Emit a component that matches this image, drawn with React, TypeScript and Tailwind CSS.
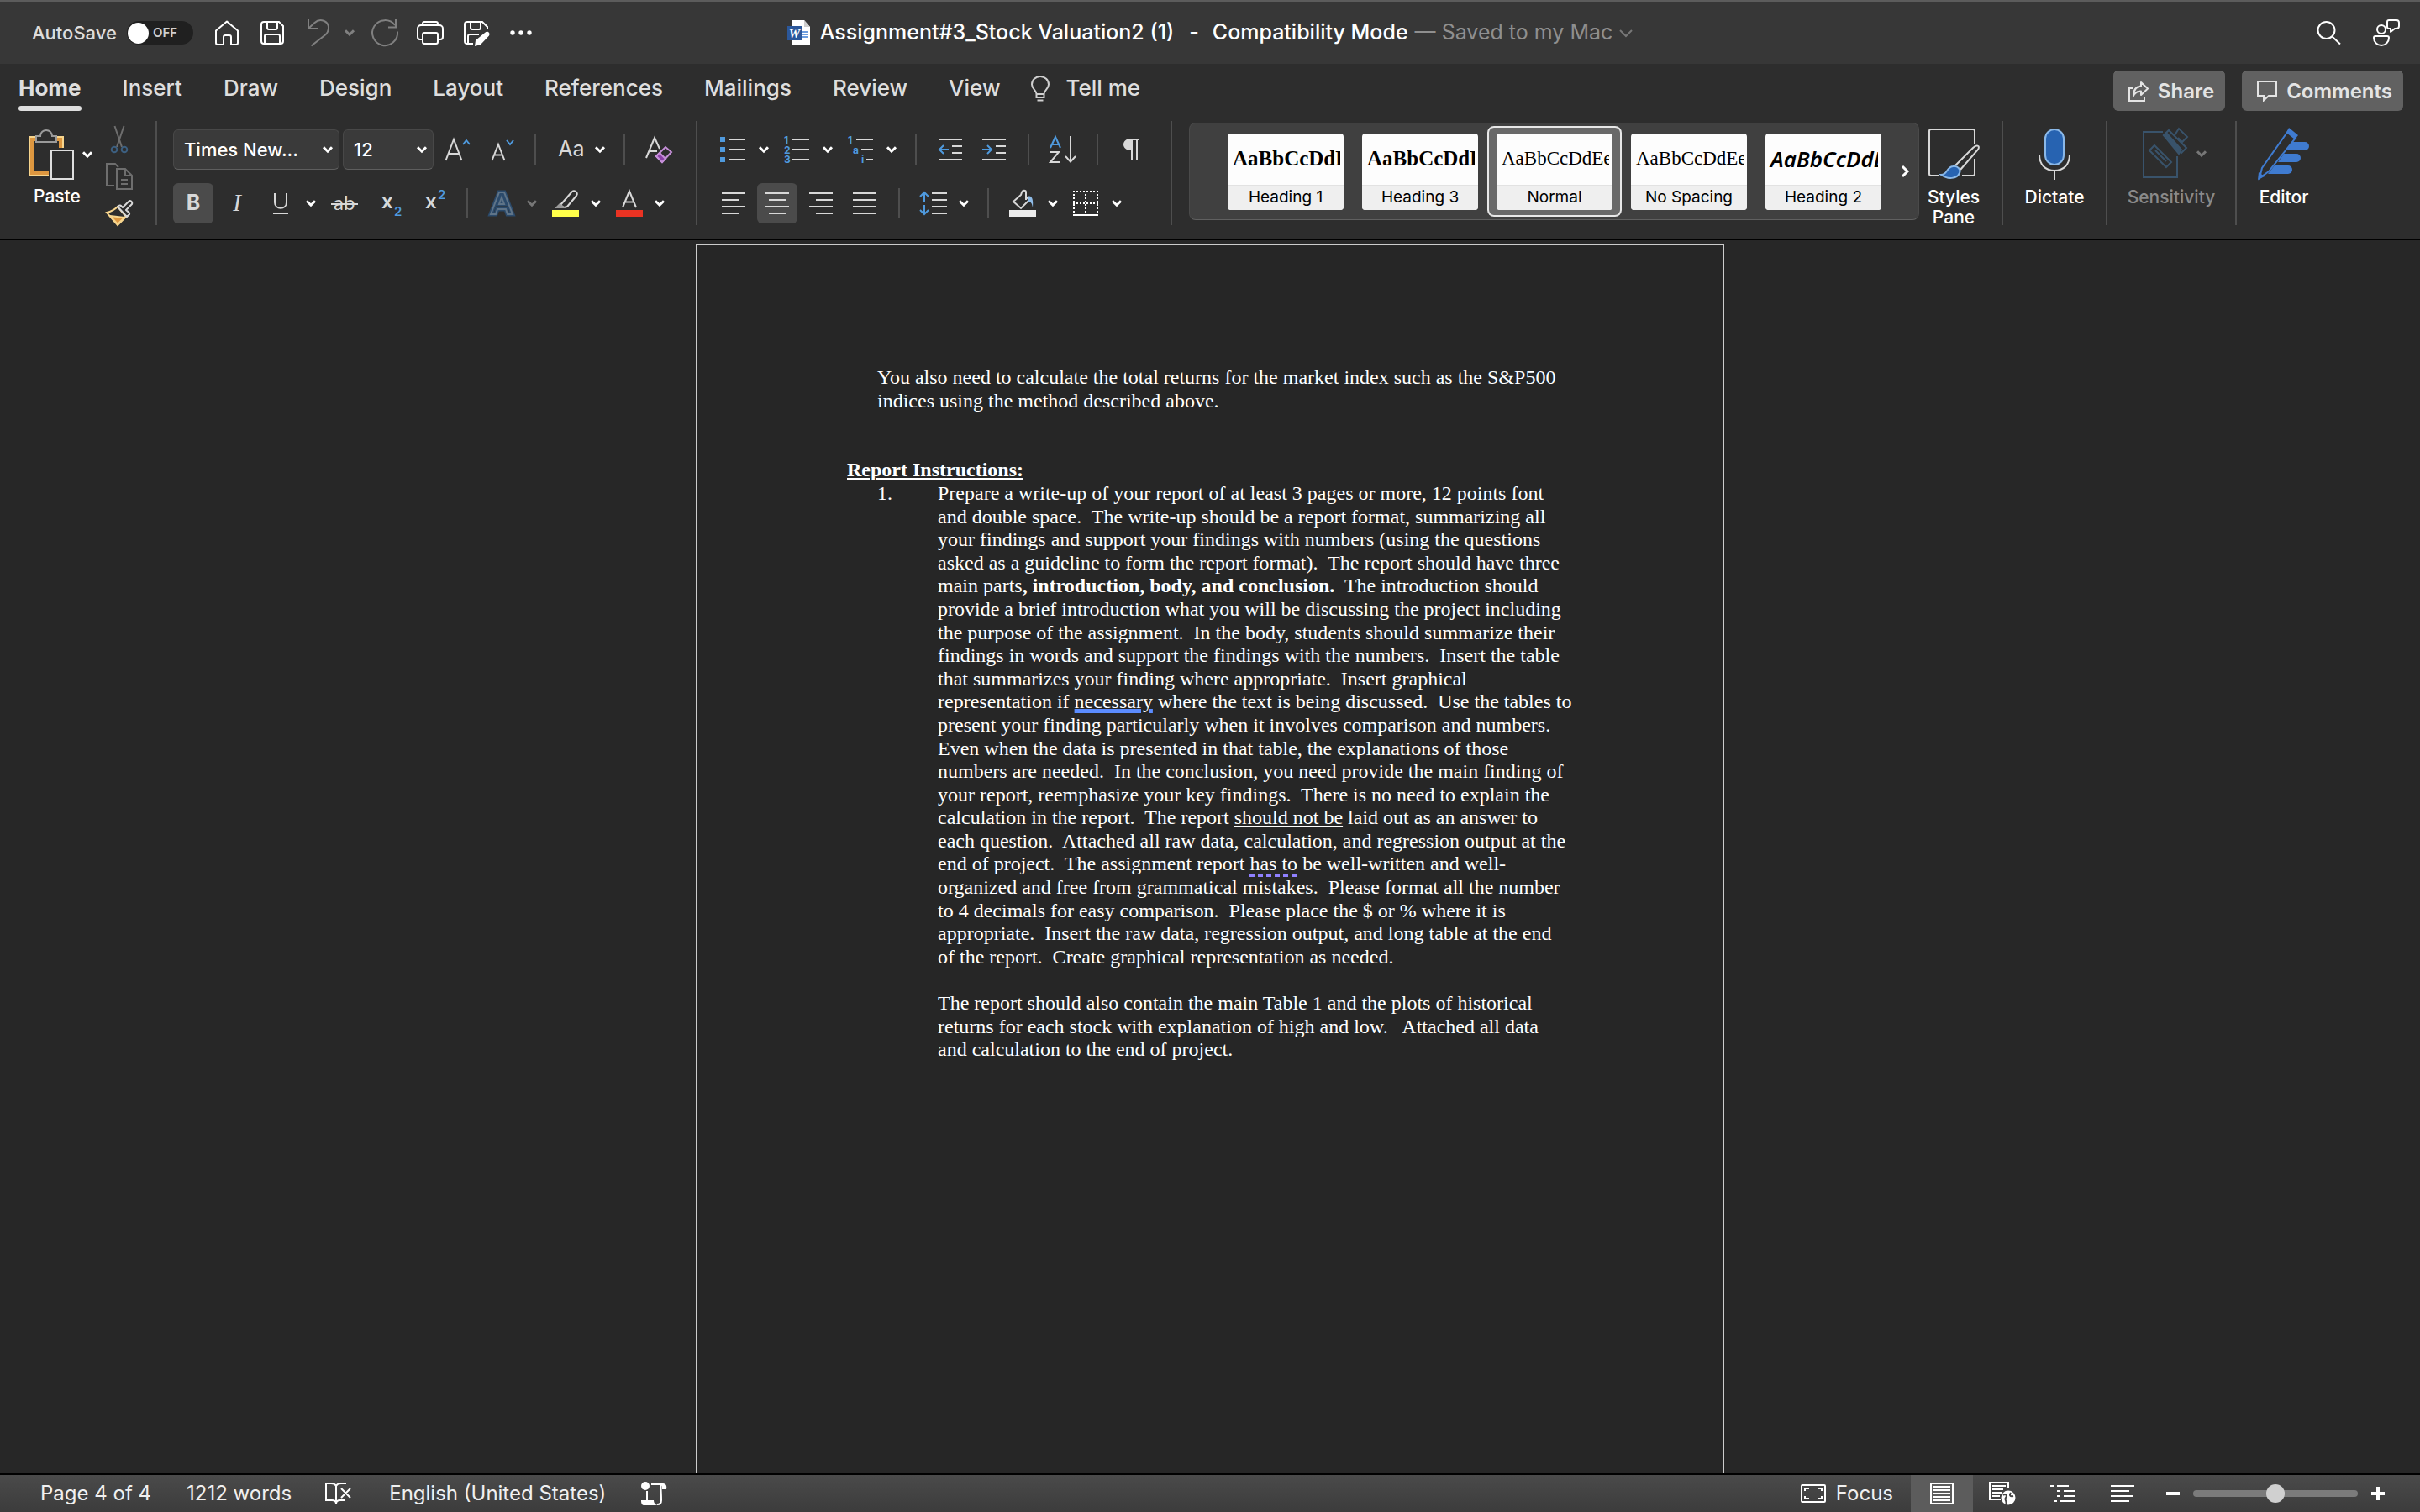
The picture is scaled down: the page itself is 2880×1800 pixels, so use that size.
import React from "react";

type IconProps = {
  w: number;
  h: number;
  color?: string;
  sw?: number;
  children: React.ReactNode;
};

function Icon({ w, h, color = "#d8d8d8", sw = 2, children }: IconProps) {
  return (
    <svg
      width={w}
      height={h}
      viewBox={`0 0 ${w} ${h}`}
      fill="none"
      stroke={color}
      strokeWidth={sw}
      className="block shrink-0 overflow-visible"
      aria-hidden="true"
    >
      {children}
    </svg>
  );
}

function Chevron({ color = "#ffffff" }: { color?: string }) {
  return (
    <Icon w={12} h={8} color={color} sw={3}>
      <path d="M1 1.2 6 6.2 11 1.2" />
    </Icon>
  );
}

function Tool({
  label,
  className = "",
  children,
}: {
  label: string;
  className?: string;
  children: React.ReactNode;
}) {
  return (
    <button type="button" aria-label={label} className={`flex shrink-0 items-center ${className}`}>
      {children}
    </button>
  );
}

function Divider({ className = "" }: { className?: string }) {
  return <div className={`h-9 w-[2px] shrink-0 bg-[#4e4e4e] ${className}`} />;
}

function GroupDivider({ className = "" }: { className?: string }) {
  return <div className={`h-[124px] w-[2px] shrink-0 bg-[#4e4e4e] ${className}`} />;
}

const BLUE = "#4f9ade";

/* ---------- title bar ---------- */

function TitleBar() {
  return (
    <header className="grid h-[76px] shrink-0 grid-cols-[1fr_auto_1fr] items-center border-t-2 border-[#5c5c5c] bg-[#373737]">
      <div className="flex items-center pl-[38px]">
        <label className="flex items-center text-[22px] font-medium text-[#dcdcdc]">
          AutoSave
          <input type="checkbox" role="switch" className="sr-only" />
          <span className="ml-3 flex h-7 w-[79px] items-center rounded-full bg-[#202020] text-[15px] font-semibold text-[#cfcfcf]">
            <span className="mx-px size-[25px] rounded-full bg-white" />
            <span className="ml-1">OFF</span>
          </span>
        </label>
        <Tool label="Home" className="ml-[26px]">
          <Icon w={28} h={30} color="#fff">
            <path
              d="M1 12.5 14 1.5 27 12.5V27a2 2 0 0 1-2 2H19V20a2 2 0 0 0-2-2H12a2 2 0 0 0-2 2V29H3a2 2 0 0 1-2-2Z"
              strokeLinejoin="round"
            />
          </Icon>
        </Tool>
        <Tool label="Save" className="ml-[26px]">
          <Icon w={28} h={28} color="#fff">
            <path d="M4 1H22L27 6V24a3 3 0 0 1-3 3H4a3 3 0 0 1-3-3V4a3 3 0 0 1 3-3Z" />
            <path d="M8 1V8a2 2 0 0 0 2 2h8a2 2 0 0 0 2-2V1M5 27V18a2 2 0 0 1 2-2H21a2 2 0 0 1 2 2v9" />
          </Icon>
        </Tool>
        <Tool label="Undo" className="ml-7">
          <Icon w={26} h={32} color="#808080">
            <path d="M1 0V11H12M1 11 8.500 4C15-2 25 2 25 10 25 14.500 23 17 20.500 19L4.500 31.500" />
          </Icon>
        </Tool>
        <Tool label="Undo history" className="ml-[18px]">
          <Chevron color="#808080" />
        </Tool>
        <Tool label="Redo" className="ml-5">
          <Icon w={32} h={32} color="#808080">
            <path d="M31 14.500A15 15 0 1 1 28 7M29 0V9.500H20" />
          </Icon>
        </Tool>
        <Tool label="Print" className="ml-[22px]">
          <Icon w={32} h={28} color="#fff">
            <path d="M7 22H4a3 3 0 0 1-3-3V9a4 4 0 0 1 4-4H27a4 4 0 0 1 4 4V19a3 3 0 0 1-3 3H25" />
            <path d="M7 5V3a2 2 0 0 1 2-2H23a2 2 0 0 1 2 2V5M9 14H23a2 2 0 0 1 2 2v9a2 2 0 0 1-2 2H9a2 2 0 0 1-2-2V16a2 2 0 0 1 2-2Z" />
          </Icon>
        </Tool>
        <Tool label="Save as" className="ml-6">
          <Icon w={31} h={32} color="#fff">
            <path d="M11 29H4a3 3 0 0 1-3-3V6a3 3 0 0 1 3-3H22L28 9V12" />
            <path d="M8 3V10a2 2 0 0 0 2 2h8a2 2 0 0 0 2-2V3M5 29V20a2 2 0 0 1 2-2H18" />
            <path d="M25 16c3-3 7 0 5 3.500L20 30l-7 2 1-7Z" fill="#fff" stroke="none" />
          </Icon>
        </Tool>
        <Tool label="More commands" className="ml-6">
          <Icon w={26} h={6} color="none">
            <g fill="#fff">
              <circle cx="3" cy="3" r="2.700" />
              <circle cx="13" cy="3" r="2.700" />
              <circle cx="23" cy="3" r="2.700" />
            </g>
          </Icon>
        </Tool>
      </div>

      <h1 className="flex items-center text-[25px] font-medium whitespace-pre text-white">
        <Icon w={27} h={30} color="none">
          <path d="M5 0H20L27 8V30H5Z" fill="#fff" />
          <path d="M20 0V8H27Z" fill="#cfcfcf" />
          <path d="M17 14h7M17 17h7M17 20h7" stroke="#3b7dd8" strokeWidth="1.500" />
          <rect x="0" y="7" width="17" height="17" fill="#2b579a" />
          <text
            x="8.500"
            y="21"
            textAnchor="middle"
            fill="#fff"
            fontSize="15"
            fontWeight="700"
            fontStyle="italic"
            fontFamily="Liberation Serif, serif"
          >
            W
          </text>
        </Icon>
        <span className="ml-3">Assignment#3_Stock Valuation2 (1)</span>
        <span className="ml-[18px]">-</span>
        <span className="ml-4">Compatibility Mode</span>
        <button type="button" className="ml-2 flex items-center font-normal text-[#8f8f8f]">
          — Saved to my Mac
          <span className="ml-2">
            <Icon w={16} h={9} color="#777">
              <path d="M1 1 8 8 15 1" />
            </Icon>
          </span>
        </button>
      </h1>

      <div className="flex items-center justify-end pr-6">
        <Tool label="Search">
          <Icon w={29} h={28} color="#fff">
            <circle cx="11.500" cy="11" r="10" />
            <path d="M18.500 18.500 28 27.500" />
          </Icon>
        </Tool>
        <Tool label="Account" className="ml-[38px]">
          <Icon w={32} h={32} color="#fff">
            <circle cx="10" cy="12" r="5" />
            <path d="M3 20H17a2 2 0 0 1 2 2C19 27 15 31 10 31S1 27 1 22a2 2 0 0 1 2-2Z" />
            <path
              d="M19 1H28a3 3 0 0 1 3 3V8a3 3 0 0 1-3 3H26L21 15V11H19a2 2 0 0 1-2-2V3a2 2 0 0 1 2-2Z"
              strokeLinejoin="round"
            />
          </Icon>
        </Tool>
      </div>
    </header>
  );
}

/* ---------- tab strip ---------- */

const tabs = ["Insert", "Draw", "Design", "Layout", "References", "Mailings", "Review", "View"];

function TabStrip() {
  return (
    <div className="flex h-[68px] items-start justify-between pr-5 pl-[22px]">
      <nav className="flex gap-[49px] pt-3 text-[26px] leading-[34px] font-medium text-[#dedede]">
        <div className="flex flex-col">
          <button type="button" className="font-bold">
            Home
          </button>
          <span className="mt-1 h-[6px] rounded-full bg-[#dedede]" />
        </div>
        {tabs.map((t) => (
          <button type="button" key={t} className="h-[34px]">
            {t}
          </button>
        ))}
        <button type="button" className="-ml-3 flex h-[34px] items-center gap-[19px]">
          <Icon w={22} h={31} color="#d0d0d0">
            <path d="M6.500 22C6.500 17 1 16 1 10.500a10 9.500 0 0 1 20 0C21 16 15.500 17 15.500 22V26H6.500ZM6.500 22H15.500M7.500 29.500H14.500" />
          </Icon>
          Tell me
        </button>
      </nav>
      <div className="flex gap-5 pt-2 text-2xl font-semibold text-[#e4e4e4]">
        <button
          type="button"
          className="flex h-12 items-center gap-[11px] rounded-md border-t border-[#7a7a7a] bg-[#616161] pr-[13px] pl-[18px]"
        >
          <Icon w={24} h={26} color="#e4e4e4">
            <path d="M6 9H1V24H19V19" />
            <path
              d="M15 2 23 9.500 15 17V12.500C11 12.500 8 14 6 18 6 11 9 7 15 6.500Z"
              strokeLinejoin="round"
            />
          </Icon>
          Share
        </button>
        <button
          type="button"
          className="flex h-12 items-center gap-[11px] rounded-md border-t border-[#7a7a7a] bg-[#616161] pr-[13px] pl-[18px]"
        >
          <Icon w={24} h={25} color="#e4e4e4">
            <path d="M1 1H23V18H14L8 23.500V18H1Z" />
          </Icon>
          Comments
        </button>
      </div>
    </div>
  );
}

/* ---------- ribbon ---------- */

function ClipboardGroup() {
  return (
    <div className="flex h-[124px] w-[151px] shrink-0 justify-between pr-[27px]">
      <button type="button" className="flex h-[104px] flex-col pt-[10px] text-left">
        <span className="flex items-center">
          <Icon w={54} h={60}>
            <path d="M24 52H4V12H38V22" stroke="#dd9740" strokeWidth="4" />
            <path d="M24 55H1V9H41V22" stroke="#f7d58d" />
            <path d="M9 8H14C14-1.500 28-1.500 28 8H33V15H9Z" fill="#2d2d2d" stroke="#9a9a9a" />
            <path d="M27 25H53V59H27Z" stroke="#dedede" />
          </Icon>
          <span className="ml-[10px]">
            <Chevron />
          </span>
        </span>
        <span className="mt-2 ml-[6px] text-[21px] leading-6 font-medium text-white">Paste</span>
      </button>
      <div className="flex flex-col items-center gap-3 pt-[6px]">
        <Tool label="Cut">
          <Icon w={22} h={32} color="#6e6e6e">
            <path d="M5.500 0 14 25M16.500 0 8 25" />
            <g stroke="#3c5f80">
              <circle cx="5" cy="28" r="3.300" />
              <circle cx="17" cy="28" r="3.300" />
            </g>
          </Icon>
        </Tool>
        <Tool label="Copy">
          <Icon w={32} h={32} color="#6e6e6e">
            <path d="M10 27H1V1H11L15 5" />
            <path d="M13 7H23L31 15V31H13ZM23 7V15H31M18 20H26M18 25H26" />
          </Icon>
        </Tool>
        <Tool label="Format painter">
          <Icon w={32} h={32}>
            <path d="M1 15C6 14 10 12 14 8L24 20 14 30Z" stroke="#f7d58d" />
            <path d="M5 19 22 21 14 29Z" fill="#dd9740" stroke="#f7d58d" />
            <path
              d="M14 8 25 20 28 17C29 15 26 14 24 12L31 5C32 2 29 0 27 2L20 9C18 7 17 5 14 8Z"
              fill="#2d2d2d"
              strokeLinejoin="round"
            />
          </Icon>
        </Tool>
      </div>
    </div>
  );
}

function RibbonSelect({
  label,
  value,
  className,
}: {
  label: string;
  value: string;
  className: string;
}) {
  return (
    <div className={`relative h-12 shrink-0 ${className}`}>
      <select
        aria-label={label}
        className="h-12 w-full appearance-none rounded-md border border-[#484848] border-b-[#5e5e5e] bg-[#3a3a3a] pl-3 text-[22px] font-medium text-white"
      >
        <option>{value}</option>
      </select>
      <span className="pointer-events-none absolute top-5 right-2">
        <Chevron />
      </span>
    </div>
  );
}

const sans = "Inter, sans-serif";

function FontGroup() {
  return (
    <div className="flex shrink-0 flex-col gap-4 pt-[10px]">
      <div className="flex h-12 items-center">
        <RibbonSelect label="Font" value="Times New..." className="w-[198px]" />
        <RibbonSelect label="Font size" value="12" className="ml-1 w-[108px]" />
        <Tool label="Increase font size" className="ml-[13px]">
          <Icon w={32} h={28}>
            <path d="M1.500 27 11 2 20.500 27M5 19H17" />
            <path d="M22 8 26 3 30 8" stroke={BLUE} />
          </Icon>
        </Tool>
        <Tool label="Decrease font size" className="ml-[23px]">
          <Icon w={28} h={28}>
            <path d="M1.500 27 9 8 16.500 27M4 20.500H14" />
            <path d="M19 3 23 8 27 3" stroke={BLUE} />
          </Icon>
        </Tool>
        <Divider className="ml-6" />
        <Tool label="Change case" className="ml-6">
          <span className="w-[36px] text-[25px] text-[#d8d8d8]">Aa</span>
          <span className="ml-[10px]">
            <Chevron />
          </span>
        </Tool>
        <Divider className="ml-[22px]" />
        <Tool label="Clear formatting" className="ml-6">
          <Icon w={32} h={32}>
            <path d="M1 26 11 2 17 15M5 18H14" />
            <path d="M13 24 24 13 31 19 20 31Z" stroke="#c58fd8" />
            <path d="M13 24 17 20 24 27 20 31Z" fill="#8a3fa6" stroke="#c58fd8" />
          </Icon>
        </Tool>
      </div>
      <div className="flex h-12 items-center">
        <Tool label="Bold" className="h-12 w-12 justify-center rounded-md bg-[#4b4b4b]">
          <span className="text-[25px] font-bold text-[#d8d8d8]">B</span>
        </Tool>
        <Tool label="Italic" className="ml-5 w-4 justify-center">
          <span className="font-['Liberation_Serif',serif] text-[29px] text-[#d8d8d8] italic">I</span>
        </Tool>
        <Tool label="Underline" className="ml-[34px]">
          <Icon w={20} h={28}>
            <path d="M3 2V13C3 22 17 22 17 13V2M1 26H19" />
          </Icon>
          <span className="ml-5">
            <Chevron />
          </span>
        </Tool>
        <Tool label="Strikethrough" className="ml-[18px]">
          <Icon w={32} h={24}>
            <text x="3" y="20" fontSize="24" fill="#d8d8d8" stroke="none" fontFamily="Lato, sans-serif">
              ab
            </text>
            <path d="M0 13H32" />
          </Icon>
        </Tool>
        <Tool label="Subscript" className="ml-[28px]">
          <Icon w={26} h={36}>
            <text x="0" y="24" fontSize="24" fontWeight="600" fill="#d8d8d8" stroke="none" fontFamily={sans}>
              x
            </text>
            <text x="15" y="33" fontSize="15" fontWeight="600" fill={BLUE} stroke="none" fontFamily={sans}>
              2
            </text>
          </Icon>
        </Tool>
        <Tool label="Superscript" className="ml-[26px]">
          <Icon w={26} h={36}>
            <text x="0" y="24" fontSize="24" fontWeight="600" fill="#d8d8d8" stroke="none" fontFamily={sans}>
              x
            </text>
            <text x="15" y="13" fontSize="15" fontWeight="600" fill={BLUE} stroke="none" fontFamily={sans}>
              2
            </text>
          </Icon>
        </Tool>
        <Divider className="ml-[23px]" />
        <Tool label="Text effects" className="ml-[24px]">
          <Icon w={32} h={32}>
            <path
              d="M3 29 13 3H19L29 29H23L21 23H11L9 29ZM13 17H19L16 9Z"
              stroke="#2b4a6b"
              strokeWidth="5"
            />
            <path d="M3 29 13 3H19L29 29H23L21 23H11L9 29ZM13 17H19L16 9Z" stroke="#5f7488" />
          </Icon>
          <span className="ml-[14px]">
            <Chevron color="#777777" />
          </span>
        </Tool>
        <Tool label="Highlight colour" className="ml-[18px]">
          <Icon w={32} h={32}>
            <path d="M10 18 23 3C26-1 32 3 29 7L18 20 14 21Z" strokeLinejoin="round" />
            <path d="M9 16 16 22 3 22Z" fill="#9a9a9a" stroke="none" />
            <path d="M0 24H32V32H0Z" fill="#ffff4a" stroke="none" />
          </Icon>
          <span className="ml-[14px]">
            <Chevron />
          </span>
        </Tool>
        <Tool label="Font colour" className="ml-[18px]">
          <Icon w={32} h={32}>
            <path d="M8 21 16 1.500 24 21M11 14.500H21" />
            <path d="M0 24H32V32H0Z" fill="#ea3323" stroke="none" />
          </Icon>
          <span className="ml-[14px]">
            <Chevron />
          </span>
        </Tool>
      </div>
    </div>
  );
}

function BlueText({ x, y, children }: { x: number; y: number; children: string }) {
  return (
    <text x={x} y={y} fontSize="12" fontWeight="700" fill={BLUE} stroke="none" fontFamily={sans}>
      {children}
    </text>
  );
}

function ParagraphGroup() {
  return (
    <div className="flex shrink-0 flex-col gap-4 pt-[10px]">
      <div className="flex h-12 items-center">
        <Tool label="Bullets">
          <Icon w={30} h={30}>
            <path d="M0 0H6V6H0ZM0 12H6V18H0ZM0 24H6V30H0Z" fill={BLUE} stroke="none" />
            <path d="M10 3H30M10 15H30M10 27H30" />
          </Icon>
          <span className="ml-4">
            <Chevron />
          </span>
        </Tool>
        <Tool label="Numbering" className="ml-[18px]">
          <Icon w={30} h={32}>
            <BlueText x={0} y={9}>1</BlueText>
            <BlueText x={0} y={21}>2</BlueText>
            <BlueText x={0} y={32}>3</BlueText>
            <path d="M10 4H30M10 16H30M10 28H30" />
          </Icon>
          <span className="ml-4">
            <Chevron />
          </span>
        </Tool>
        <Tool label="Multilevel list" className="ml-[18px]">
          <Icon w={30} h={32}>
            <BlueText x={0} y={9}>1</BlueText>
            <BlueText x={6} y={21}>a</BlueText>
            <BlueText x={16} y={32}>i</BlueText>
            <path d="M10 4H30M16 16H30M22 28H30" />
          </Icon>
          <span className="ml-4">
            <Chevron />
          </span>
        </Tool>
        <Divider className="ml-[22px]" />
        <Tool label="Decrease indent" className="ml-[26px]">
          <Icon w={28} h={26}>
            <path d="M0 1H28M0 25H28M16 9H28M16 17H28" />
            <path d="M12 13H1M6 8 1 13 6 18" stroke={BLUE} />
          </Icon>
        </Tool>
        <Tool label="Increase indent" className="ml-6">
          <Icon w={28} h={26}>
            <path d="M0 1H28M0 25H28M16 9H28M16 17H28" />
            <path d="M0 13H11M6 8 11 13 6 18" stroke={BLUE} />
          </Icon>
        </Tool>
        <Divider className="ml-[26px]" />
        <Tool label="Sort" className="ml-6">
          <Icon w={32} h={32}>
            <path d="M1 14 7 1 13 14M3 10H11" stroke={BLUE} />
            <path d="M1 19H11L1 31H12M25 0V30M19 24 25 30.500 31 24" />
          </Icon>
        </Tool>
        <Divider className="ml-6" />
        <Tool label="Show marks" className="ml-[30px]">
          <Icon w={20} h={26}>
            <path d="M19 1H8M10 1V25M16 1V25" />
            <path d="M9 0C-3 0-3 14 9 14Z" fill="#d8d8d8" stroke="none" />
          </Icon>
        </Tool>
      </div>
      <div className="flex h-12 items-center">
        <Tool label="Align left" className="ml-[2px]">
          <Icon w={28} h={28}>
            <path d="M0 2H28M0 10H20M0 18H28M0 26H20" />
          </Icon>
        </Tool>
        <Tool label="Align centre" className="ml-[14px] h-12 w-12 justify-center rounded-md bg-[#4b4b4b]">
          <Icon w={28} h={28}>
            <path d="M0 2H28M4 10H24M0 18H28M4 26H24" />
          </Icon>
        </Tool>
        <Tool label="Align right" className="ml-[14px]">
          <Icon w={28} h={28}>
            <path d="M0 2H28M8 10H28M0 18H28M8 26H28" />
          </Icon>
        </Tool>
        <Tool label="Justify" className="ml-6">
          <Icon w={28} h={28}>
            <path d="M0 2H28M0 10H28M0 18H28M0 26H28" />
          </Icon>
        </Tool>
        <Divider className="ml-[26px]" />
        <Tool label="Line spacing" className="ml-6">
          <Icon w={32} h={28}>
            <path d="M14 2H32M14 10H32M14 18H32M14 26H32" />
            <path d="M5 12V1M0 6 5 1 10 6M5 16V27M0 22 5 27 10 22" stroke={BLUE} />
          </Icon>
          <span className="ml-[14px]">
            <Chevron />
          </span>
        </Tool>
        <Divider className="ml-[22px]" />
        <Tool label="Shading" className="ml-6">
          <Icon w={32} h={32}>
            <path d="M20 12V3C20 0 16 0 15 3L14 6 5 14 14 22 24 12 20 8" />
            <path d="M22 8C27 6 29 11 28 21 27 16 26 14 23 14Z" fill="#8fbce8" stroke="none" />
            <path d="M0 24H32V32H0Z" fill="#ececec" stroke="none" />
          </Icon>
          <span className="ml-[14px]">
            <Chevron />
          </span>
        </Tool>
        <Tool label="Borders" className="ml-[18px]">
          <Icon w={30} h={30} color="#fff">
            <path d="M0 1H30M0 15H30M1 4V28M29 4V28M15 4V28" strokeDasharray="2 2" />
            <path d="M0 29H30" />
          </Icon>
          <span className="ml-4">
            <Chevron />
          </span>
        </Tool>
      </div>
    </div>
  );
}

const styleCards = [
  { name: "Heading 1", font: "font-['Liberation_Serif',serif] text-[25px] font-bold" },
  { name: "Heading 3", font: "font-['Liberation_Serif',serif] text-[25px] font-bold" },
  { name: "Normal", font: "font-['Liberation_Serif',serif] text-[23px]", selected: true },
  { name: "No Spacing", font: "font-['Liberation_Serif',serif] text-[23px]" },
  { name: "Heading 2", font: "font-['Noto_Sans',sans-serif] text-[26px] font-semibold italic" },
];

function StylesGallery() {
  return (
    <div className="mt-[2px] flex h-[116px] shrink-0 items-center rounded-lg border border-[#4a4a4a] border-b-[#606060] bg-[#404040] pl-[34px]">
      {styleCards.map((s) => (
        <button
          type="button"
          key={s.name}
          className={`flex h-[108px] w-[160px] items-center justify-center rounded-lg border-2 ${
            s.selected ? "border-[#e8e8e8] bg-[#696969]" : "border-transparent"
          }`}
        >
          <span className="flex h-[91px] w-[138px] flex-col overflow-hidden rounded-sm bg-[#fdfdfd] text-black">
            <span className={`mx-1 flex h-[61px] items-center overflow-hidden pl-[2px] ${s.font}`}>
              AaBbCcDdEe
            </span>
            <span className="flex h-[30px] items-center justify-center border-t border-[#e2e2e2] bg-[#efefef] text-[19px]">
              {s.name}
            </span>
          </span>
        </button>
      ))}
      <Tool label="More styles" className="mr-[11px] ml-3">
        <Icon w={10} h={14} color="#fff" sw={3}>
          <path d="M2 1 8 7 2 13" />
        </Icon>
      </Tool>
    </div>
  );
}

function BigButton({
  label,
  dim = false,
  className = "",
  children,
}: {
  label: React.ReactNode;
  dim?: boolean;
  className?: string;
  children: React.ReactNode;
}) {
  return (
    <button
      type="button"
      className={`flex shrink-0 flex-col items-center pt-2 text-[21px] leading-6 font-medium ${
        dim ? "text-[#8a8a8a]" : "text-white"
      } ${className}`}
    >
      <span className="mb-[9px] flex items-center">{children}</span>
      {label}
    </button>
  );
}

function Ribbon() {
  return (
    <div className="flex h-[142px] items-start border-b-2 border-black pl-[34px]">
      <ClipboardGroup />
      <GroupDivider />
      <div className="ml-[19px]">
        <FontGroup />
      </div>
      <GroupDivider className="ml-7" />
      <div className="ml-[27px]">
        <ParagraphGroup />
      </div>
      <GroupDivider className="ml-9" />
      <div className="ml-5">
        <StylesGallery />
      </div>
      <BigButton
        className="w-[82px]"
        label={
          <span>
            Styles
            <br />
            Pane
          </span>
        }
      >
        <Icon w={62} h={62}>
          <path d="M14 57H4a2 2 0 0 1-2-2V4a2 2 0 0 1 2-2H54a2 2 0 0 1 2 2V19M56 37V55a2 2 0 0 1-2 2H41" />
          <path d="M33 45 54 24C58 20 63 21 60 26L39 50" />
          <path
            d="M16 56C24 56 22 47 30 46 36 45 40 50 38 54 35 61 24 62 16 56Z"
            fill="#2763b1"
            stroke="#8ab8e8"
          />
        </Icon>
      </BigButton>
      <GroupDivider className="ml-4" />
      <BigButton className="w-[122px]" label="Dictate">
        <Icon w={38} h={62}>
          <rect x="8" y="2" width="22" height="42" rx="11" fill="#2763b1" stroke="#8ab8e8" />
          <path d="M1 32C1 44 8 51 19 51S37 44 37 32M19 51V62" />
        </Icon>
      </BigButton>
      <GroupDivider />
      <BigButton className="w-[152px]" dim label="Sensitivity">
        <Icon w={54} h={62} color="#39536b">
          <path d="M24 5H1V59H41V34" />
          <path d="M14 21 34 41 28 47 8 27ZM15 27 28 40" />
          <path d="M31 3 52 24 46 30 25 9Z" />
          <path d="M25 9 28 6 46 26 43 31Z" fill="#39536b" />
          <path d="M38 9 43 1 53 11 47 17 42 12" />
        </Icon>
        <span className="-mr-2 ml-[10px]">
          <Chevron color="#777777" />
        </span>
      </BigButton>
      <GroupDivider />
      <BigButton className="ml-[22px] w-[68px]" label="Editor">
        <Icon w={62} h={62} color="none">
          <path
            d="M41 17H56a5 5 0 0 1 0 10H34ZM31 31H46a5 5 0 0 1 0 10H24ZM20 45H36a5 5 0 0 1 0 10H12Z"
            fill="#3f7bd0"
          />
          <path d="M36 4 45 12 13 52 2 60 5 48Z" fill="#2d2d2d" stroke="#3f7bd0" strokeWidth="2" />
          <path d="M37 0 48 9 44 14 34 6ZM1 53 8 58 0 62Z" fill="#3f7bd0" />
        </Icon>
      </BigButton>
    </div>
  );
}

/* ---------- document ---------- */

function DocumentPage() {
  return (
    <article className="mx-auto mt-1 h-[1584px] w-[1224px] shrink-0 border-2 border-[#cccccc] bg-[#262626] px-[178px] pt-36 font-['Liberation_Serif',serif] text-2xl leading-[1.15] whitespace-pre-wrap text-white">
      <p className="ml-9">
        You also need to calculate the total returns for the market index such as the S&amp;P500 indices
        using the method described above.
      </p>
      <br />
      <br />
      <h2 className="font-bold underline decoration-2 underline-offset-2">Report Instructions:</h2>
      <ol className="ml-9">
        <li className="flex">
          <span className="w-[72px] shrink-0">1.</span>
          <div className="min-w-0 flex-1">
            <p>
              {
                "Prepare a write-up of your report of at least 3 pages or more, 12 points font and double space.  The write-up should be a report format, summarizing all your findings and support your findings with numbers (using the questions asked as a guideline to form the report format).  The report should have three main parts"
              }
              <b>, introduction, body, and conclusion.</b>
              {
                "  The introduction should provide a brief introduction what you will be discussing the project including the purpose of the assignment.  In the body, students should summarize their findings in words and support the findings with the numbers.  Insert the table that summarizes your finding where appropriate.  Insert graphical representation if "
              }
              <span className="underline decoration-[#5b8cff] decoration-double decoration-2 underline-offset-1">
                necessary
              </span>
              {
                " where the text is being discussed.  Use the tables to present your finding particularly when it involves comparison and numbers.  Even when the data is presented in that table, the explanations of those numbers are needed.  In the conclusion, you need provide the main finding of your report, reemphasize your key findings.  There is no need to explain the calculation in the report.  The report "
              }
              <span className="underline decoration-2 underline-offset-2">should not be</span>
              {
                " laid out as an answer to each question.  Attached all raw data, calculation, and regression output at the end of project.  The assignment report "
              }
              <span className="bg-[repeating-linear-gradient(90deg,#8f80ff_0_6px,transparent_6px_10px)] bg-[length:100%_4px] bg-bottom bg-no-repeat pb-[3px]">
                has to
              </span>
              {
                " be well-written and well-organized and free from grammatical mistakes.  Please format all the number to 4 decimals for easy comparison.  Please place the $ or % where it is appropriate.  Insert the raw data, regression output, and long table at the end of the report.  Create graphical representation as needed."
              }
            </p>
            <br />
            <p>
              {
                "The report should also contain the main Table 1 and the plots of historical returns for each stock with explanation of high and low.   Attached all data\nand calculation to the end of project."
              }
            </p>
          </div>
        </li>
      </ol>
    </article>
  );
}

/* ---------- status bar ---------- */

function StatusBar() {
  return (
    <footer className="flex h-[46px] shrink-0 items-center justify-between border-t-2 border-black bg-linear-to-b from-[#4a4a4a] to-[#3c3c3c] text-2xl text-[#f0f0f0]">
      <div className="flex items-center pl-12">
        <button type="button">Page 4 of 4</button>
        <button type="button" className="ml-[42px]">
          1212 words
        </button>
        <Tool label="Proofing" className="ml-10">
          <Icon w={32} h={26} color="#fff">
            <path d="M13 4C12 2 10 1 7 1H1V21H8C11 21 13 22 13 25 13 22 15 21 18 21H24M13 25V4C14 2 16 1 19 1H25M19 7 30 18M30 7 19 18" />
          </Icon>
        </Tool>
        <button type="button" className="ml-[44px]">
          English (United States)
        </button>
        <Tool label="Macros" className="ml-[42px]">
          <Icon w={32} h={28} color="#fff">
            <circle cx="5" cy="5" r="5" fill="#fff" stroke="none" />
            <path d="M7 11V24M12 3H26C22 3 24 8 24 22 24 26 22 27 19 27" />
            <path d="M25 2C29 2 31 4 30 9H25ZM0 22H15C15 25 17 28 20 28H4C1 28 0 26 0 22Z" fill="#fff" stroke="none" />
          </Icon>
        </Tool>
      </div>
      <div className="flex h-full items-center pr-[42px]">
        <button type="button" className="flex items-center gap-3">
          <Icon w={30} h={22} color="#fff">
            <rect x="1" y="1" width="28" height="20" rx="1" />
            <path d="M5 8V5H10M20 5H25V8M25 14V17H20M10 17H5V14" />
          </Icon>
          Focus
        </button>
        <Tool label="Print layout" className="ml-[21px] h-full w-[74px] justify-center bg-[#5c5c5c]">
          <Icon w={28} h={26} color="#fff">
            <path d="M1 1H27V25H1ZM4 5H24M4 9H24M4 13H24M4 17H24M4 21H24" />
          </Icon>
        </Tool>
        <Tool label="Web layout" className="ml-[19px]">
          <Icon w={32} h={28} color="#fff">
            <path d="M14 21H1V1H23V8M4 5H20M4 9H17M4 13H15M4 17H13" />
            <circle cx="23" cy="19" r="8.500" fill="#fff" stroke="none" />
            <path d="M17 16C20 13 22 17 20 19S22 24 20 26M26 13C24 16 25 18 29 17" stroke="#444" />
          </Icon>
        </Tool>
        <Tool label="Outline" className="ml-[41px]">
          <Icon w={30} h={20} color="#fff">
            <path d="M0 1H4M8 1H22M8 7H12M16 7H30M8 13H12M16 13H30M4 19H8M12 19H30" />
          </Icon>
        </Tool>
        <Tool label="Draft" className="ml-[42px]">
          <Icon w={28} h={20} color="#fff">
            <path d="M0 1H28M0 7H22M0 13H26M0 19H22" />
          </Icon>
        </Tool>
        <Tool label="Zoom out" className="ml-[38px]">
          <Icon w={16} h={4} color="#fff" sw={4}>
            <path d="M0 2H16" />
          </Icon>
        </Tool>
        <input
          type="range"
          aria-label="Zoom"
          defaultValue={50}
          className="ml-4 h-2 w-[196px] appearance-none rounded-full bg-[#7b7b7b] [&::-webkit-slider-thumb]:size-[22px] [&::-webkit-slider-thumb]:appearance-none [&::-webkit-slider-thumb]:rounded-full [&::-webkit-slider-thumb]:bg-[#d0d0d0]"
        />
        <Tool label="Zoom in" className="ml-4">
          <Icon w={16} h={16} color="#fff" sw={4}>
            <path d="M0 8H16M8 0V16" />
          </Icon>
        </Tool>
      </div>
    </footer>
  );
}

export default function App() {
  return (
    <div className="flex h-screen w-full flex-col overflow-hidden bg-[#272727] font-['Inter',sans-serif]">
      <TitleBar />
      <div className="shrink-0 bg-[#2d2d2d]">
        <TabStrip />
        <Ribbon />
      </div>
      <main className="flex min-h-0 flex-1 flex-col overflow-hidden">
        <DocumentPage />
      </main>
      <StatusBar />
    </div>
  );
}
